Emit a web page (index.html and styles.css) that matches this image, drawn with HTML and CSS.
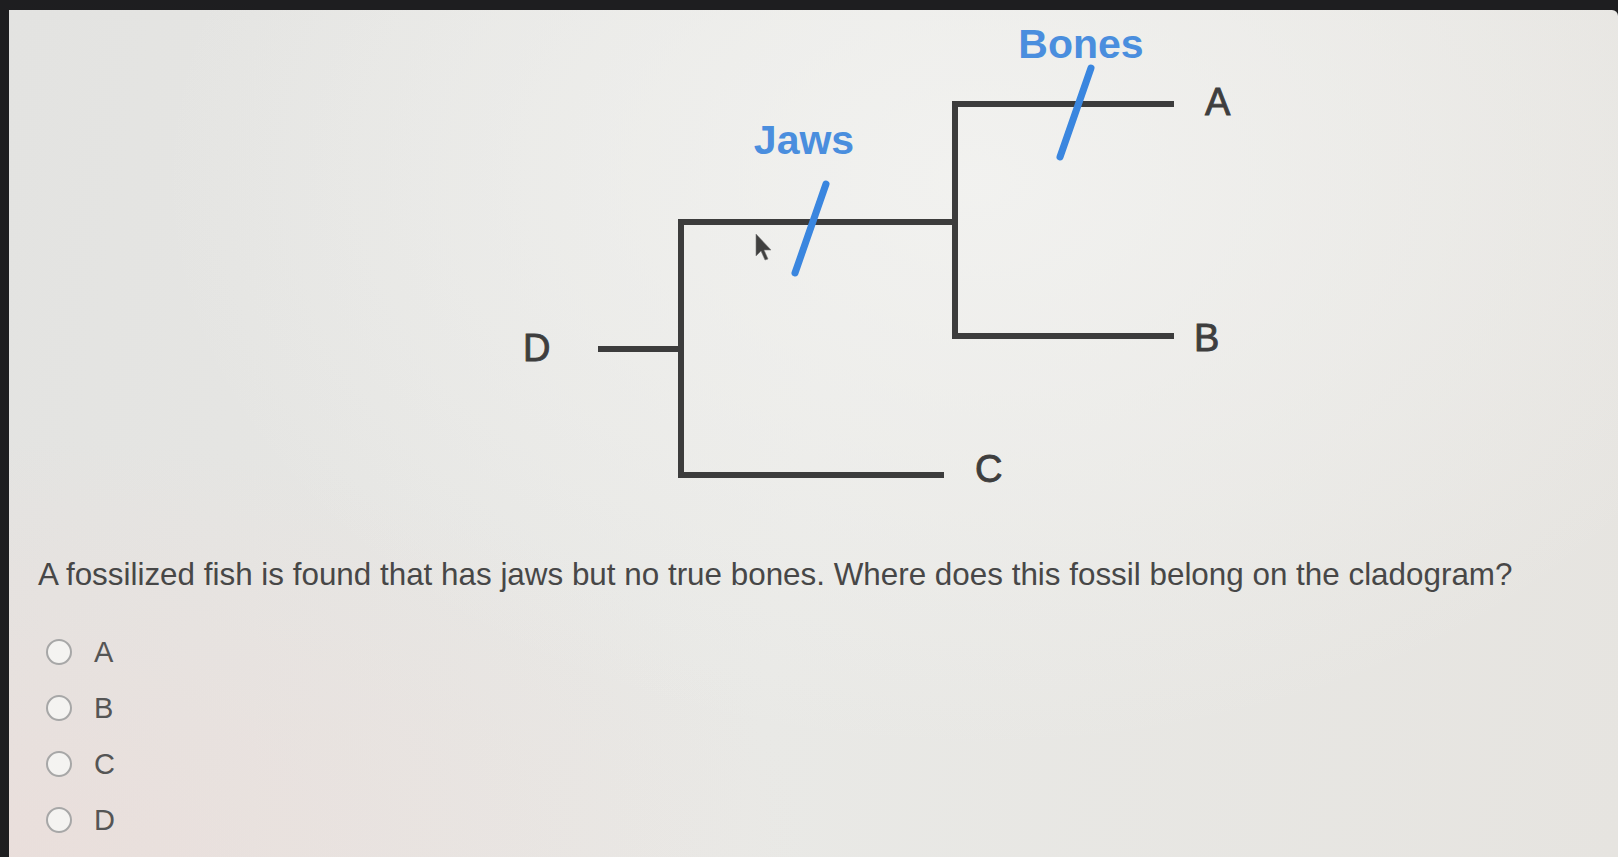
FILE: index.html
```html
<!DOCTYPE html>
<html lang="en">
<head>
  <meta charset="UTF-8">
  <meta name="viewport" content="width=device-width, initial-scale=1.0">
  <title>Cladogram Question</title>
  <link rel="stylesheet" href="styles.css">
</head>
<body>
  <div class="screen">
    <div class="diagram">
      <svg class="cladogram" width="1609" height="520" viewBox="0 0 1609 520">
        <g class="branch">
          <line x1="589" y1="339" x2="672" y2="339"/>
          <polyline points="946,212 672,212 672,465 935,465"/>
          <polyline points="1165,94 946,94 946,326 1165,326"/>
        </g>
        <g class="trait">
          <line x1="817" y1="174" x2="786" y2="263"/>
          <line x1="1082" y1="58" x2="1051" y2="147"/>
        </g>
        <text class="trait-label" x="1072" y="48">Bones</text>
        <text class="trait-label" x="795" y="144">Jaws</text>
        <text class="taxon" x="1196" y="105">A</text>
        <text class="taxon" x="1185" y="341">B</text>
        <text class="taxon" x="966" y="472">C</text>
        <text class="taxon" x="514" y="351">D</text>
        <path class="cursor" d="M747 224 L747 246 L752 241 L756 250 L759 249 L755 240 L762 240 Z"/>
      </svg>
    </div>

    <p class="question">A fossilized fish is found that has jaws but no true bones. Where does this fossil belong on the cladogram?</p>

    <ul class="options">
      <li class="option"><span class="radio"></span><span class="option-label">A</span></li>
      <li class="option"><span class="radio"></span><span class="option-label">B</span></li>
      <li class="option"><span class="radio"></span><span class="option-label">C</span></li>
      <li class="option"><span class="radio"></span><span class="option-label">D</span></li>
    </ul>
  </div>
</body>
</html>
```

FILE: styles.css
```css
html, body {
  height: 100%;
}

body {
  margin: 0;
  background-color: #1e1e20;
  font-family: 'Liberation Sans', Arial, sans-serif;
  overflow: hidden;
}

.screen {
  height: calc(100% - 10px);
  margin: 10px 0 0 9px;
  border-top-right-radius: 6px;
  background:
    radial-gradient(ellipse at 60% 20%, rgba(243, 243, 241, 0.85), rgba(243, 243, 241, 0) 60%),
    radial-gradient(ellipse at 0% 100%, rgba(238, 218, 214, 0.55), rgba(238, 218, 214, 0) 35%),
    linear-gradient(100deg, #e3e3e1 0%, #e9e9e6 50%, #e6e4e0 100%);
  display: flex;
  flex-direction: column;
}

.diagram {
  height: 520px;
}

.cladogram {
  display: block;
}

.branch line,
.branch polyline {
  fill: none;
  stroke: #3c3c3c;
  stroke-width: 6;
  stroke-linejoin: miter;
}

.trait line {
  stroke: #3a86df;
  stroke-width: 7;
  stroke-linecap: round;
}

.trait-label {
  fill: #4a8ede;
  font-family: 'Liberation Sans', Arial, sans-serif;
  font-weight: bold;
  font-size: 41px;
  text-anchor: middle;
}

.taxon {
  fill: #3e3e3e;
  stroke: #3e3e3e;
  stroke-width: 0.9;
  font-family: 'Liberation Sans', Arial, sans-serif;
  font-size: 38px;
}

.cursor {
  fill: #222;
  stroke: #666;
  stroke-width: 0.6;
  opacity: 0.85;
}

.question {
  margin: 27px 0 0 29px;
  font-size: 31.4px;
  color: #474747;
}

.options {
  list-style: none;
  margin: 44px 0 0 0;
  padding: 0 0 0 37px;
  display: flex;
  flex-direction: column;
  gap: 26px;
}

.option {
  display: flex;
  align-items: center;
  gap: 22px;
  height: 30px;
}

.radio {
  width: 22px;
  height: 22px;
  border: 2px solid #a7a7a7;
  border-radius: 50%;
  background-color: #f4f3f1;
}

.option-label {
  font-size: 29px;
  color: #555;
}
```
